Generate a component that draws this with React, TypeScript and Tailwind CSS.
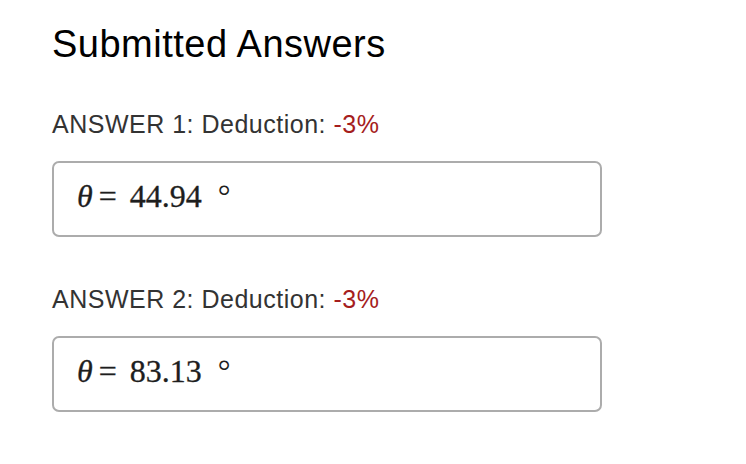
import React from "react";

function AnswerBox({ value }: { value: string }) {
  return (
    <div className="w-[550px] h-[76px] border-2 border-[#acacac] rounded-[7px] pl-[23px] pt-[15px]">
      <div className="flex items-baseline text-[32px] leading-[36px] text-[#1e1e1e] font-['Liberation_Serif','Times_New_Roman',serif] [-webkit-text-stroke:0.3px_#1e1e1e]">
        <span className="italic">θ</span>
        <span className="ml-[6px]">=</span>
        <span className="ml-[13px]">{value}</span>
        <span className="ml-[16px] [-webkit-text-stroke:0px]">°</span>
      </div>
    </div>
  );
}

export default function App() {
  return (
    <div className="bg-white w-[746px] h-[464px] pl-[52px] pt-[21px] font-['Liberation_Sans',Arial,sans-serif]">
      <h2 className="text-[38px] leading-[46px] tracking-[0.5px] text-black">Submitted Answers</h2>
      <div className="mt-[42px] text-[25px] leading-[30px] tracking-[0.5px] text-[#333]">
        ANSWER 1: Deduction: <span className="text-[#a51d1d]">-3%</span>
      </div>
      <div className="mt-[22px]">
        <AnswerBox value="44.94" />
      </div>
      <div className="mt-[47px] text-[25px] leading-[30px] tracking-[0.5px] text-[#333]">
        ANSWER 2: Deduction: <span className="text-[#a51d1d]">-3%</span>
      </div>
      <div className="mt-[22px]">
        <AnswerBox value="83.13" />
      </div>
    </div>
  );
}
